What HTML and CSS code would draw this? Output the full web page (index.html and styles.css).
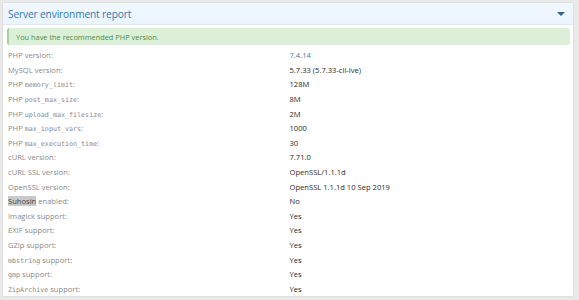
FILE: index.html
```html
<!DOCTYPE html>
<html lang="en">
<head>
  <meta charset="UTF-8" />
  <title>Server environment report</title>
  <link rel="stylesheet" href="styles.css">
</head>
<body>
  <div class="block">
    <h2 class="block-header">
      <span>Server environment report</span>
      <span class="toggle"></span>
    </h2>
    <div class="block-body">
      <div class="alert">You have the recommended PHP version.</div>

      <dl class="pairs">
        <dt>PHP version:</dt>
        <dd><a href="#">7.4.14</a></dd>
        <dt>MySQL version:</dt>
        <dd>5.7.33 (5.7.33-cll-lve)</dd>
        <dt>PHP <code>memory_limit</code>:</dt>
        <dd>128M</dd>
        <dt>PHP <code>post_max_size</code>:</dt>
        <dd>8M</dd>
        <dt>PHP <code>upload_max_filesize</code>:</dt>
        <dd>2M</dd>
        <dt>PHP <code>max_input_vars</code>:</dt>
        <dd>1000</dd>
        <dt>PHP <code>max_execution_time</code>:</dt>
        <dd>30</dd>
        <dt>cURL version:</dt>
        <dd>7.71.0</dd>
        <dt>cURL SSL version:</dt>
        <dd>OpenSSL/1.1.1d</dd>
        <dt>OpenSSL version:</dt>
        <dd>OpenSSL 1.1.1d 10 Sep 2019</dd>
        <dt><span class="selected">Suhosin</span> enabled:</dt>
        <dd>No</dd>
        <dt>Imagick support:</dt>
        <dd>Yes</dd>
        <dt>EXIF support:</dt>
        <dd>Yes</dd>
        <dt>GZip support:</dt>
        <dd>Yes</dd>
        <dt><code>mbstring</code> support:</dt>
        <dd>Yes</dd>
        <dt><code>gmp</code> support:</dt>
        <dd>Yes</dd>
        <dt><code>ZipArchive</code> support:</dt>
        <dd>Yes</dd>
      </dl>
    </div>
  </div>
</body>
</html>
```

FILE: styles.css
```css
body {
  margin: 0;
  padding: 2px 5px 3px 2px;
  background: #e9e9e9;
  font-family: "Open Sans", sans-serif;
  font-size: 7.6px;
  color: #2b2b2b;
}
.block {
  background: #fff;
  border: 1px solid #dfdfdf;
  border-radius: 2px;
}
.block-header {
  margin: 0;
  height: 21px;
  padding: 0 8px 0 5px;
  display: flex;
  align-items: center;
  justify-content: space-between;
  background: linear-gradient(to bottom, #f1f8fe, #eaf4fd);
  border-bottom: 1px solid #dce8f2;
  font-size: 10.2px;
  letter-spacing: -0.15px;
  font-weight: normal;
  color: #2f7cb6;
}
.toggle {
  width: 0;
  height: 0;
  border-left: 4px solid transparent;
  border-right: 4px solid transparent;
  border-top: 4px solid #2a6595;
}
.block-body {
  padding: 3px 3px 0 4px;
}
.alert {
  height: 17px;
  display: flex;
  align-items: center;
  padding-left: 7px;
  background: #dcf0d8;
  border-left: 2px solid #a8d0a0;
  border-radius: 2px;
  color: #4f8a47;
  font-size: 7.4px;
}
.pairs {
  margin: 3px 0 0;
  display: grid;
  grid-template-columns: 50% 50%;
  grid-auto-rows: 14.6px;
  align-items: center;
}
.pairs dt {
  color: #8a8a8a;
  padding-left: 1px;
}
.pairs dd {
  margin: 0;
  padding-left: 1px;
}
.pairs a {
  color: #3f7fa8;
  text-decoration: none;
}
.pairs code {
  font-family: "DejaVu Sans Mono", monospace;
  font-size: 6.7px;
}
.selected {
  background: #c9c9c9;
  color: #444;
}
```
